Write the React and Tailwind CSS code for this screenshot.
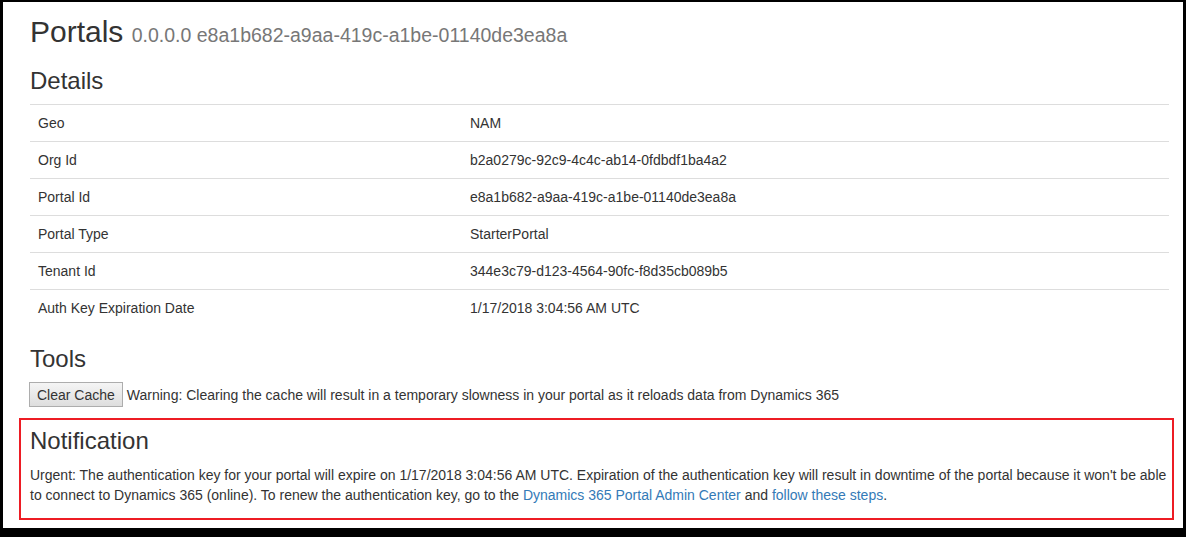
import React from 'react';

const details = [
  ['Geo', 'NAM'],
  ['Org Id', 'b2a0279c-92c9-4c4c-ab14-0fdbdf1ba4a2'],
  ['Portal Id', 'e8a1b682-a9aa-419c-a1be-01140de3ea8a'],
  ['Portal Type', 'StarterPortal'],
  ['Tenant Id', '344e3c79-d123-4564-90fc-f8d35cb089b5'],
  ['Auth Key Expiration Date', '1/17/2018 3:04:56 AM UTC'],
];

const App = () => {
  return (
    <div
      className="box-border h-[537px] w-full overflow-hidden border-solid border-black border-t-2 border-l-[3px] border-r-[3px] border-b-[9px] bg-white text-[14px] leading-[20px] text-[#333]"
      style={{ fontFamily: '"Liberation Sans", Arial, sans-serif' }}
    >
      <div className="pl-[27px] pr-[14px]">
        <h1 className="mt-[14px] text-[30px] leading-[32px] font-normal">
          Portals <span className="text-[19.5px] text-[#777]">0.0.0.0 e8a1b682-a9aa-419c-a1be-01140de3ea8a</span>
        </h1>

        <h2 className="mt-[16px] text-[24px] leading-[28px] font-normal">Details</h2>
        <table className="mt-[9px] w-full border-collapse">
          <tbody>
            {details.map(([label, value]) => (
              <tr key={label}>
                <td className="w-[432px] border-t border-[#ddd] px-2 py-2 align-top">{label}</td>
                <td className="border-t border-[#ddd] px-2 py-2 align-top">{value}</td>
              </tr>
            ))}
          </tbody>
        </table>

        <h2 className="mt-[19px] text-[24px] leading-[28px] font-normal">Tools</h2>
        <div className="mt-[9px] flex items-center">
          <button className="h-[25px] -ml-[1px] border border-[#adadad] bg-gradient-to-b from-[#f5f5f5] to-[#dedede] px-[7px] text-[14px] leading-[20px] text-[#333]">
            Clear Cache
          </button>
          <span className="ml-[4px]">
            Warning: Clearing the cache will result in a temporary slowness in your portal as it reloads data from Dynamics 365
          </span>
        </div>

        {/* Notification */}
        <div className="mt-[11px] -ml-[11px] -mr-[5px] border-2 border-[#ed1c24] pl-[9px] pr-[5px] pt-[7px] pb-[13px]">
          <h2 className="text-[24px] leading-[28px] font-normal">Notification</h2>
          <p className="mt-[10px]">
            Urgent: The authentication key for your portal will expire on 1/17/2018 3:04:56 AM UTC. Expiration of the authentication key will result in downtime of the portal because it won't be able to connect to Dynamics 365 (online). To renew the authentication key, go to the{' '}
            <a href="#" className="text-[#337ab7]">Dynamics 365 Portal Admin Center</a> and{' '}
            <a href="#" className="text-[#337ab7]">follow these steps</a>.
          </p>
        </div>
      </div>
    </div>
  );
};

export default App;
